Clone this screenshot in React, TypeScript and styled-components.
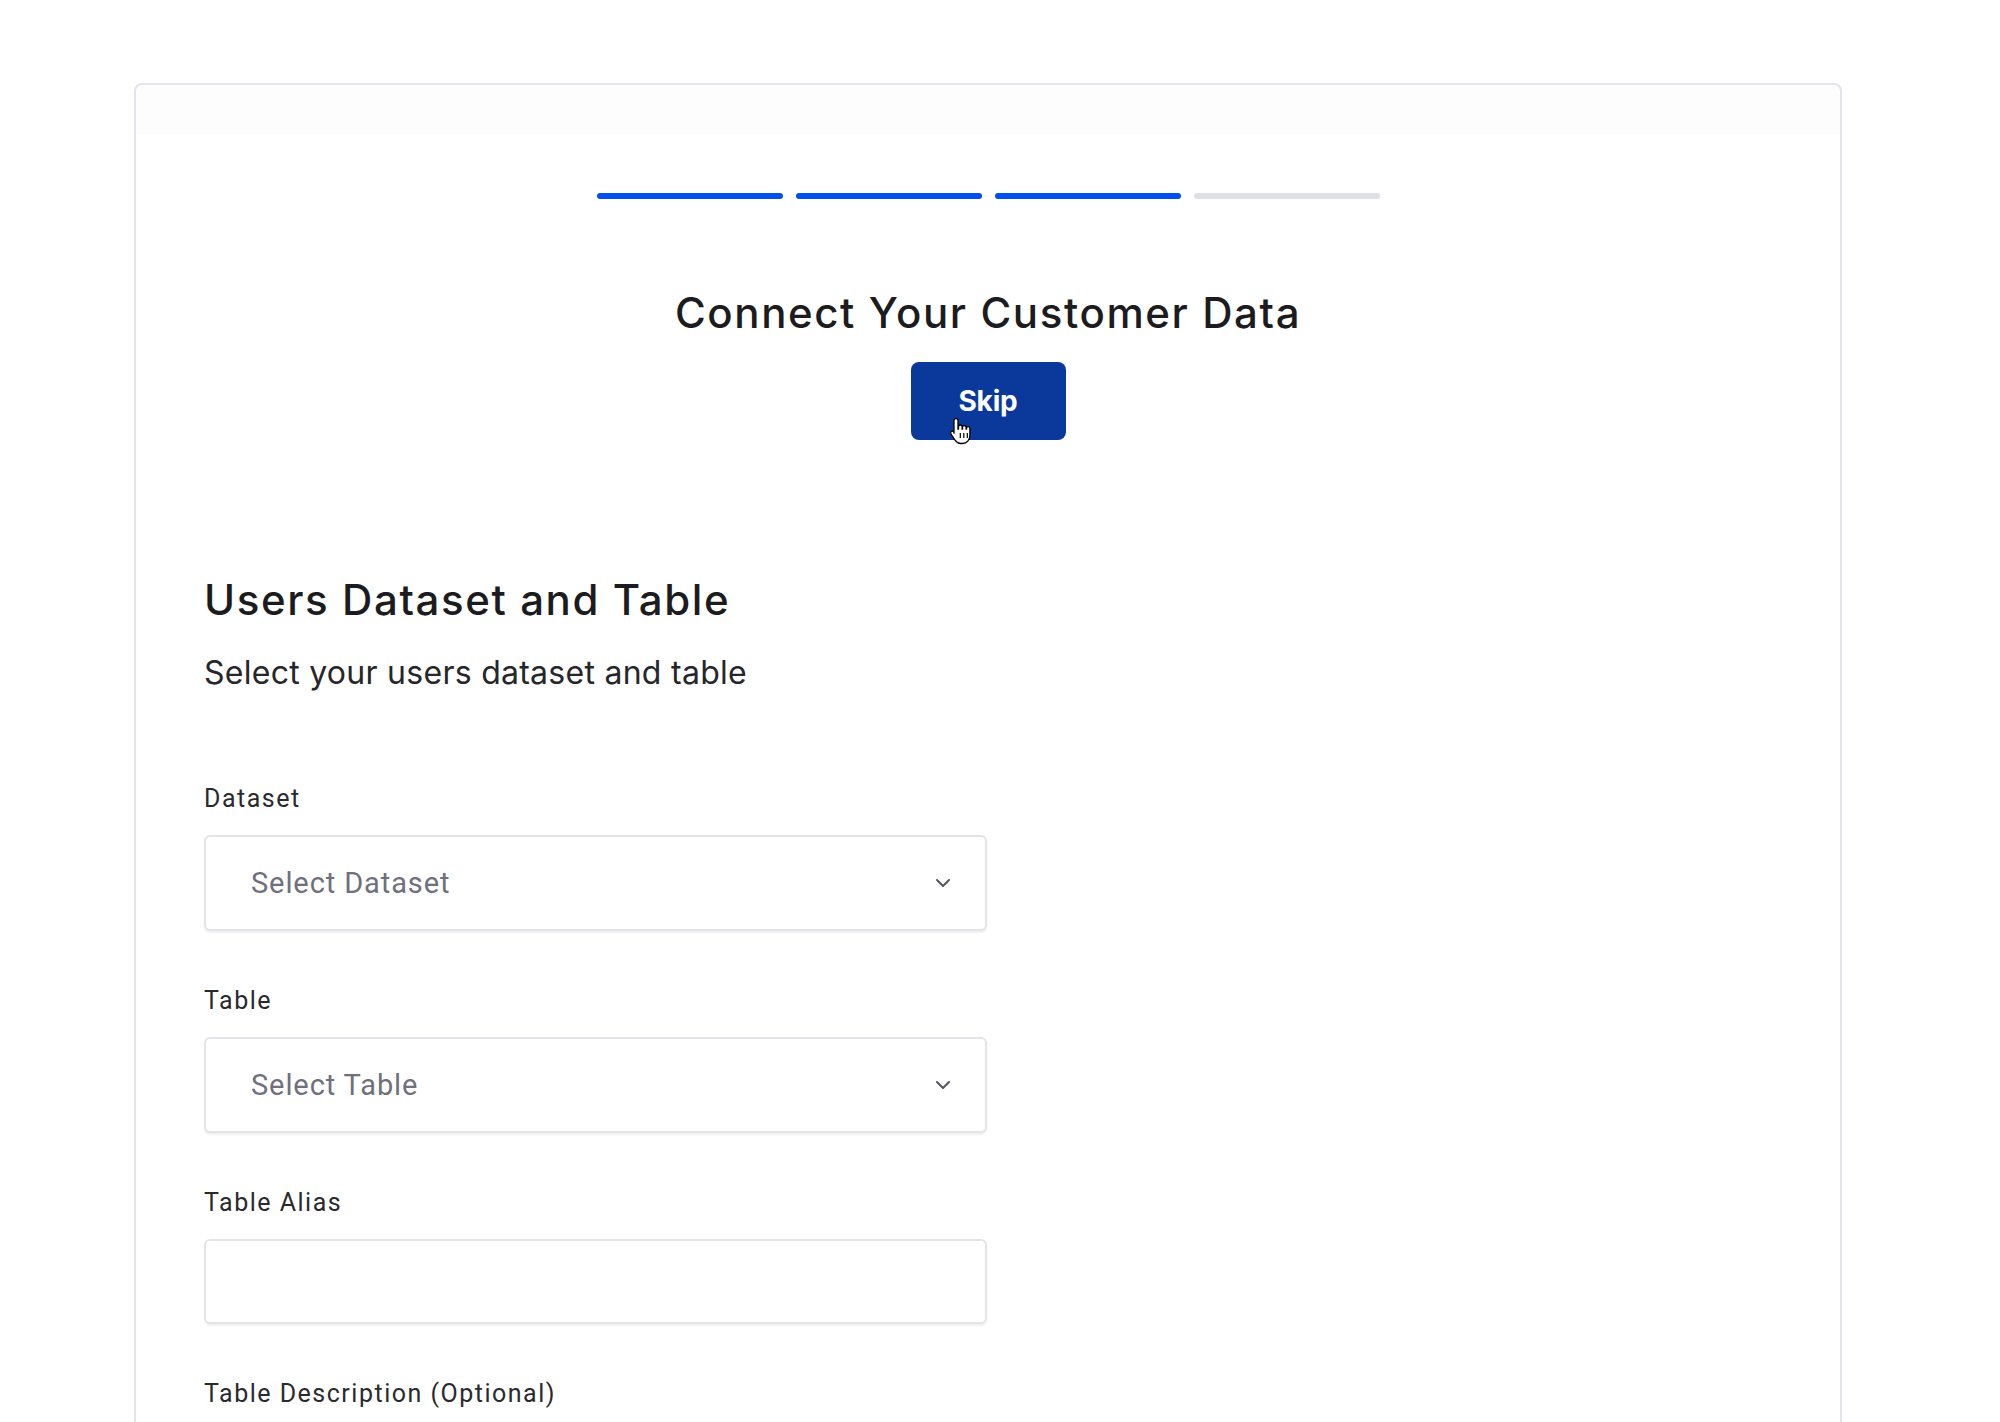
import React from "react";
import styled, { createGlobalStyle } from "styled-components";

const GlobalStyle = createGlobalStyle`
  html, body {
    margin: 0;
    padding: 0;
    background: #ffffff;
    font-family: Inter, "Noto Sans", sans-serif;
    overflow: hidden;
  }
  * { box-sizing: border-box; }
`;

const Page = styled.div`
  width: 2000px;
  height: 1422px;
  padding: 83px 158px 0 134px;
  overflow: hidden;
`;

const Card = styled.section`
  width: 1708px;
  min-height: 1500px;
  border: 2px solid #e4e4ee;
  border-bottom: none;
  border-radius: 8px 8px 0 0;
  background: linear-gradient(#fdfdfe 0, #fdfdfe 50px, #ffffff 50px);
  padding: 108px 68px 0 68px;
  display: flex;
  flex-direction: column;
`;

const Progress = styled.div`
  display: flex;
  justify-content: center;
  gap: 13px;
`;

const Step = styled.div<{ $done: boolean }>`
  width: 186px;
  height: 6px;
  border-radius: 3px;
  background: ${(p) => (p.$done ? "#0450ec" : "#dfdfe7")};
`;

const Title = styled.h1`
  margin: 89px 0 0 0;
  text-align: center;
  font-family: Inter, "Noto Sans", sans-serif;
  font-size: 42px;
  line-height: 50px;
  font-weight: 500;
  letter-spacing: 1.6px;
  color: #1c1c1e;
`;

const SkipRow = styled.div`
  display: flex;
  justify-content: center;
  margin-top: 24px;
`;

const SkipButton = styled.button`
  position: relative;
  width: 155px;
  height: 78px;
  border: none;
  border-radius: 8px;
  background: #0a399b;
  color: #ffffff;
  font-family: Inter, "Noto Sans", sans-serif;
  font-size: 28px;
  font-weight: 700;
  letter-spacing: -0.2px;
  cursor: pointer;
`;

const Cursor = styled.svg`
  position: absolute;
  left: 38px;
  top: 54px;
  width: 24px;
  height: 30px;
`;

const SectionTitle = styled.h2`
  margin: 135px 0 0 0;
  font-family: Inter, "Noto Sans", sans-serif;
  font-size: 42px;
  line-height: 50px;
  font-weight: 500;
  letter-spacing: 1.6px;
  color: #1c1c1e;
`;

const SectionSub = styled.p`
  margin: 28px 0 0 0;
  font-family: Inter, "Noto Sans", sans-serif;
  font-size: 32px;
  line-height: 40px;
  font-weight: 400;
  letter-spacing: 0.27px;
  color: #26262b;
`;

const Form = styled.div`
  display: flex;
  flex-direction: column;
  margin-top: 92px;
  gap: 56px;
  width: 783px;
`;

const Field = styled.div`
  display: flex;
  flex-direction: column;
  gap: 22px;
`;

const Label = styled.label`
  font-family: Roboto, "Noto Sans", sans-serif;
  font-size: 25px;
  line-height: 28px;
  font-weight: 400;
  letter-spacing: 1.5px;
  color: #2a2a2e;
`;

const Box = styled.div<{ $h: number }>`
  height: ${(p) => p.$h}px;
  border: 2px solid #e3e3e8;
  border-radius: 6px;
  background: #ffffff;
  box-shadow: 0 2px 2px rgba(0, 0, 0, 0.06);
  display: flex;
  align-items: center;
  justify-content: space-between;
  padding: 0 34px 0 45px;
`;

const Placeholder = styled.span`
  font-family: Roboto, "Noto Sans", sans-serif;
  font-size: 29px;
  color: #6f6f7d;
  letter-spacing: 0.9px;
`;

const Chevron = () => (
  <svg width="16" height="10" viewBox="0 0 16 10" fill="none">
    <path d="M2 2l6 6 6-6" stroke="#55555f" strokeWidth="2" strokeLinecap="round" strokeLinejoin="round" />
  </svg>
);

const SelectBox = ({ placeholder }: { placeholder: string }) => (
  <Box $h={96}>
    <Placeholder>{placeholder}</Placeholder>
    <Chevron />
  </Box>
);

export default function App() {
  return (
    <>
      <GlobalStyle />
      <Page>
        <Card>
          <Progress>
            <Step $done />
            <Step $done />
            <Step $done />
            <Step $done={false} />
          </Progress>
          <Title>Connect Your Customer Data</Title>
          <SkipRow>
            <SkipButton>
              Skip
              <Cursor viewBox="0 0 24 30">
                <path
                  d="M7 2.5c1.1 0 2 .9 2 2V13h.5v-2.2c0-1 .8-1.8 1.8-1.8s1.8.8 1.8 1.8V13h.4v-1.5c0-1 .8-1.8 1.8-1.8s1.8.8 1.8 1.8V13h.4v-.6c0-1 .8-1.7 1.7-1.7s1.7.8 1.7 1.7v7.2c0 4.2-3 7.9-7.4 7.9h-1.6c-2.6 0-4.5-1.3-5.9-3.4l-4-6c-.6-.9-.4-2 .4-2.6.8-.6 1.9-.4 2.5.4L5 17.8V4.5c0-1.1.9-2 2-2z"
                  fill="#ffffff"
                  stroke="#000000"
                  strokeWidth="1.3"
                />
                <path d="M11.3 17v5M14.8 17v5M18.3 17v5" stroke="#000" strokeWidth="1.2" />
              </Cursor>
            </SkipButton>
          </SkipRow>
          <SectionTitle>Users Dataset and Table</SectionTitle>
          <SectionSub>Select your users dataset and table</SectionSub>
          <Form>
            <Field>
              <Label>Dataset</Label>
              <SelectBox placeholder="Select Dataset" />
            </Field>
            <Field>
              <Label>Table</Label>
              <SelectBox placeholder="Select Table" />
            </Field>
            <Field>
              <Label>Table Alias</Label>
              <Box $h={85} />
            </Field>
            <Field>
              <Label>Table Description (Optional)</Label>
            </Field>
          </Form>
        </Card>
      </Page>
    </>
  );
}
